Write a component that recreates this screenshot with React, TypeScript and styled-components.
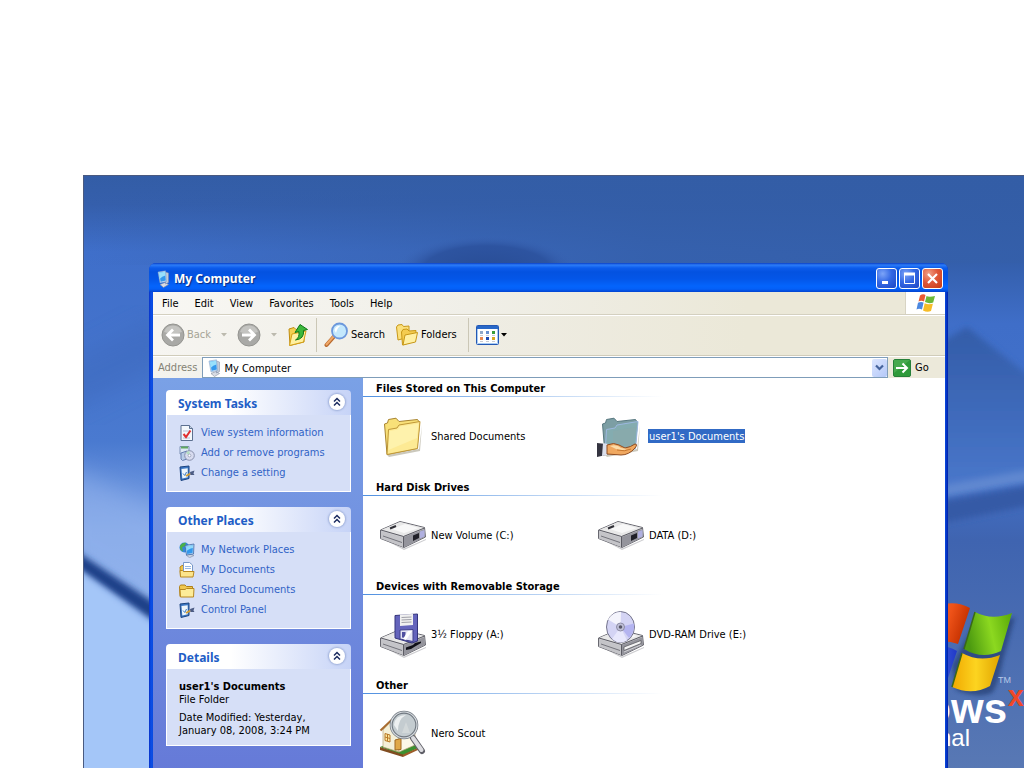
import React from "react";
import styled, { createGlobalStyle } from "styled-components";

const GlobalStyle = createGlobalStyle`
  *, *::before, *::after { box-sizing: border-box; }
  body {
    margin: 0;
    background: #fff;
    color: #000;
    font: 11px/14px "DejaVu Sans Condensed", "DejaVu Sans", sans-serif;
  }
  button, input { font: inherit; color: inherit; }
  button { border: 0; padding: 0; background: none; }
  h1, h2, p, ul { margin: 0; padding: 0; }
  ul { list-style: none; }
  svg { display: block; flex: none; }
`;

/* ---------- desktop ---------- */

const Page = styled.div`
  display: flex;
  height: 100vh;
  padding: 175px 0 0 83px;
  overflow: hidden;
`;

const Desktop = styled.div`
  position: relative;
  flex: 1;
  min-width: 0;
  overflow: hidden;
  background: #4069b8;
`;

const WallpaperArt = styled.svg`
  position: absolute;
  inset: 0;
  width: 100%;
  height: 100%;
`;

const BrandArt = styled.svg`
  position: absolute;
  top: 420px;
  right: 0;
`;

/* ---------- window frame ---------- */

const Window = styled.section`
  position: absolute;
  top: 88px;
  left: 66px;
  right: 76px;
  min-height: 560px;
  display: flex;
  flex-direction: column;
  padding: 0 3px 4px 4px;
  border-radius: 7px 7px 0 0;
  background: linear-gradient(90deg, #0831c8 0, #0a4ee6 2px, #0a4be0 4px, #0a4be0 calc(100% - 3px), #0020a8 100%);
`;

const TitleBar = styled.header`
  display: flex;
  align-items: center;
  gap: 2px;
  height: 29px;
  margin: 0 -3px 0 -4px;
  padding: 2px 5px 0 7px;
  border-radius: 7px 7px 0 0;
  background: linear-gradient(#0b3fc4 0, #2c7cf8 2px, #0c5cec 5px, #0452e0 9px, #0456e8 16px, #0464fc 23px, #0460f8 26px, #0344d0 29px);
`;

const WindowTitle = styled.h1`
  flex: 1;
  color: #fff;
  font: bold 12px/18px "Noto Sans", sans-serif;
  text-shadow: 1px 1px 1px #0a2a80;
`;

const CaptionButtons = styled.div`
  display: flex;
  gap: 2px;
`;

const CaptionButton = styled.button<{ $close?: boolean }>`
  display: grid;
  place-items: center;
  width: 21px;
  height: 21px;
  border: 1px solid #fff;
  border-radius: 3px;
  background: ${(p) =>
    p.$close
      ? "radial-gradient(circle at 30% 25%, #f0a088 0, #e0583a 45%, #c43a14 100%)"
      : "radial-gradient(circle at 30% 25%, #7ca4f8 0, #3468e4 45%, #1c46c4 100%)"};
`;

/* ---------- menu, tool and address bars ---------- */

const MenuBar = styled.nav`
  display: flex;
  height: 23px;
  padding-left: 1px;
  border-bottom: 1px solid #d4d0c0;
  background: linear-gradient(90deg, #f8f7f3, #f0efe8 40%, #ebe8d8 75%);
`;

const MenuButton = styled.button`
  height: 22px;
  padding: 1px 8px 0;
`;

const MenuLogo = styled.div`
  display: grid;
  place-items: center;
  width: 40px;
  margin-left: auto;
  border-left: 1px solid #d8d4c4;
  background: #fff;
`;

const ToolBar = styled.div`
  display: flex;
  align-items: center;
  height: 41px;
  padding: 0 8px 2px;
  border-top: 1px solid #fff;
  border-bottom: 1px solid #d0ccba;
  background: linear-gradient(90deg, #f6f5f1, #efede4 40%, #ebe8d8 75%);
`;

const ToolButton = styled.button<{ $faded?: boolean }>`
  display: flex;
  align-items: center;
  gap: 2px;
  height: 32px;
  color: ${(p) => (p.$faded ? "#a6a496" : "#000")};
`;

const ToolGroup = styled.div<{ $end?: number }>`
  display: flex;
  align-items: center;
  height: 34px;
  gap: 10px;
  padding-right: ${(p) => p.$end ?? 0}px;
`;

const Divider = styled.i`
  width: 1px;
  height: 34px;
  margin: 0 7px;
  background: #cbc7b6;
`;

const AddressBar = styled.form`
  display: flex;
  align-items: center;
  height: 22px;
  padding: 0 0 0 5px;
  gap: 5px;
  border-top: 1px solid #fff;
  background: linear-gradient(90deg, #f4f3ee, #ece9da 75%);
`;

const AddressLabel = styled.label`
  color: #848274;
`;

const AddressBox = styled.div`
  display: flex;
  flex: 1;
  align-items: center;
  gap: 1px;
  height: 21px;
  padding: 0 0 0 4px;
  border: 1px solid #7f9db9;
  background: #fff;
`;

const AddressInput = styled.input`
  flex: 1;
  min-width: 0;
  height: 18px;
  padding: 1px 0 0;
  border: 0;
  outline: 0;
  background: transparent;
`;

const DropButton = styled.button`
  display: grid;
  place-items: center;
  width: 15px;
  height: 18px;
  border-radius: 2px;
  background: linear-gradient(135deg, #dce6ff, #b4c8f8);
`;

const GoButton = styled.button`
  display: flex;
  align-items: center;
  gap: 4px;
  width: 52px;
`;

/* ---------- explorer body ---------- */

const Body = styled.div`
  display: flex;
  flex: 1;
  background: #fff;
`;

const SideBar = styled.aside`
  display: flex;
  flex-direction: column;
  flex: none;
  gap: 15px;
  width: 210px;
  padding: 12px 12px 16px 13px;
  background: linear-gradient(#7aa1e6, #6375d6);
`;

const Panel = styled.section`
  border-radius: 4px 4px 0 0;
  overflow: hidden;
`;

const PanelHeader = styled.div`
  display: flex;
  align-items: center;
  justify-content: space-between;
  height: 25px;
  padding: 0 6px 2px 12px;
  background: linear-gradient(90deg, #fff 0, #fff 35%, #c6d3f7 100%);
`;

const PanelTitle = styled.h2`
  padding-top: 5px;
  color: #215dc6;
  font: bold 12px/16px "Noto Sans", sans-serif;
`;

const CollapseButton = styled.button`
  display: grid;
  place-items: center;
  width: 16px;
  height: 16px;
  border-radius: 50%;
  background: #fff;
  box-shadow: 0 0 2px 1px #9cadd8;
`;

const PanelBody = styled.div`
  padding: 8px 12px;
  border: 1px solid #fff;
  border-top: 0;
  background: #d6dff7;
`;

const TaskLink = styled.a`
  display: flex;
  align-items: center;
  gap: 6px;
  height: 20px;
  color: #3163c6;
  text-decoration: none;
  white-space: nowrap;
`;

const DetailName = styled.p`
  padding-top: 3px;
  font-weight: bold;
  line-height: 13px;
`;

const DetailText = styled.p`
  line-height: 13px;

  & + & { padding-top: 5px; }
`;

const Content = styled.main`
  flex: 1;
  min-width: 0;
`;

const Group = styled.section`
  height: 99px;
`;

const GroupTitle = styled.h2`
  height: 19px;
  padding: 3px 0 0 13px;
  font: bold 11px/15px "DejaVu Sans Condensed", "DejaVu Sans", sans-serif;
  background: linear-gradient(90deg, #5090e0 0, #a8c8f0 150px, #fff 300px) bottom / 100% 1px no-repeat;
`;

const Tiles = styled.ul`
  display: grid;
  grid-template-columns: 218px 218px;
  padding: 15px 0 0 16px;
`;

const Tile = styled.li`
  display: flex;
  align-items: center;
  gap: 4px;
  height: 48px;
`;

const TileName = styled.span<{ $selected?: boolean }>`
  padding: 1px 1px 0;
  margin-left: -1px;
  line-height: 13px;
  color: ${(p) => (p.$selected ? "#fff" : "#000")};
  background: ${(p) => (p.$selected ? "#316ac5" : "transparent")};
`;

/* ---------- artwork ---------- */

const Wallpaper = () => (
  <WallpaperArt viewBox="0 0 941 593" preserveAspectRatio="none" aria-hidden="true">
    <defs>
      <linearGradient id="sky" x1="0" y1="0" x2="0" y2="1">
        <stop offset="0" stopColor="#335da6" />
        <stop offset=".05" stopColor="#355fac" />
        <stop offset=".13" stopColor="#3f6fca" />
        <stop offset=".3" stopColor="#4473cc" />
        <stop offset=".45" stopColor="#4a7ad0" />
        <stop offset=".6" stopColor="#7fa4e6" />
        <stop offset="1" stopColor="#a6c8f8" />
      </linearGradient>
      <linearGradient id="skyTop" x1="0" y1="0" x2="1" y2="0">
        <stop offset="0" stopColor="#335da6" stopOpacity="0" />
        <stop offset=".6" stopColor="#335da6" stopOpacity=".8" />
        <stop offset="1" stopColor="#335da6" stopOpacity=".9" />
      </linearGradient>
      <linearGradient id="right" x1="0" y1="0" x2="0" y2="1">
        <stop offset="0" stopColor="#345fac" />
        <stop offset=".12" stopColor="#3f6ec8" />
        <stop offset=".4" stopColor="#4473cc" />
        <stop offset=".55" stopColor="#3f64b0" />
        <stop offset="1" stopColor="#5878b4" />
      </linearGradient>
      <linearGradient id="hill" x1="0" y1="0" x2="0" y2="1">
        <stop offset="0" stopColor="#335ca8" />
        <stop offset="1" stopColor="#4a78cc" />
      </linearGradient>
      <radialGradient id="dome">
        <stop offset="0" stopColor="#284c94" />
        <stop offset=".7" stopColor="#2c529e" stopOpacity=".9" />
        <stop offset="1" stopColor="#3a64b4" stopOpacity="0" />
      </radialGradient>
      <filter id="soft"><feGaussianBlur stdDeviation="3" /></filter>
      <filter id="softer"><feGaussianBlur stdDeviation="12" /></filter>
    </defs>
    <rect width="941" height="593" fill="url(#sky)" />
    <rect width="941" height="90" fill="url(#skyTop)" />
    <rect x="850" y="88" width="91" height="505" fill="url(#right)" />
    <ellipse cx="404" cy="96" rx="92" ry="36" fill="url(#dome)" />
    <path d="M-20 190 80 140V190L-20 240Z" fill="#3c69bc" opacity=".5" filter="url(#softer)" />
    <path d="M-20 380 90 450V340L-20 290Z" fill="#96b6ee" opacity=".55" filter="url(#softer)" />
    <path d="M-10 374 90 440V460L-10 390Z" fill="#1d3f88" filter="url(#soft)" />
    <path d="M-10 392 90 464V600H-10Z" fill="#a4c6f8" filter="url(#soft)" />
    <path d="M850 172 884 152 950 204V305L850 318Z" fill="url(#hill)" filter="url(#soft)" />
    <path d="M850 312 950 294V306L850 324Z" fill="#6088d0" filter="url(#soft)" />
    <path d="M850 328 950 310V330L850 350Z" fill="#365aa6" filter="url(#soft)" />
    <path d="M0 .5H941M.5 0V593" stroke="#4a5a80" fill="none" />
  </WallpaperArt>
);

const Brand = () => (
  <BrandArt width="180" height="180" viewBox="0 0 180 180" aria-hidden="true">
    <defs>
      <linearGradient id="red" x1="0" x2="1" y2=".3"><stop offset="0" stopColor="#f07848" /><stop offset=".6" stopColor="#ee5218" /><stop offset="1" stopColor="#c43000" /></linearGradient>
      <linearGradient id="green" x1="0" x2="1" y1=".2"><stop offset="0" stopColor="#4c9a10" /><stop offset=".5" stopColor="#8cd820" /><stop offset="1" stopColor="#58a808" /></linearGradient>
      <linearGradient id="blue" x1="0" x2="1"><stop offset="0" stopColor="#6c98f0" /><stop offset="1" stopColor="#2038c8" /></linearGradient>
      <linearGradient id="gold" x1="0" x2="1"><stop offset="0" stopColor="#f0a800" /><stop offset=".5" stopColor="#fcd420" /><stop offset="1" stopColor="#e0a400" /></linearGradient>
      <filter id="cast"><feGaussianBlur stdDeviation="2" /></filter>
    </defs>
    <path d="M134 22Q150 30 171 22L159 65Q154 90 148 98Q134 104 112 95L108 70Z" fill="#1c3468" opacity=".6" filter="url(#cast)" />
    <path d="M90 12Q110 4 126 13L114 49Q98 43 80 50Z" fill="url(#red)" />
    <path d="M76 56Q96 46 113 56L101 92Q90 84 66 93Z" fill="url(#blue)" />
    <path d="M131 17Q148 26 168 18L157 56Q138 65 120 54Z" fill="url(#green)" />
    <path d="M118 58Q136 68 156 60L146 91Q128 101 108 92Z" fill="url(#gold)" />
    <path d="M131 17 120 54M118 58 108 92" stroke="#3a6818" strokeWidth="1.500" />
    <text x="154" y="88" fill="#b8c8e8" fontSize="9" fontFamily="Liberation Sans, sans-serif">TM</text>
    <text x="163" y="128" textAnchor="end" fill="#fff" fontSize="42" fontWeight="bold" fontFamily="Liberation Sans, sans-serif">ows</text>
    <text x="180" y="111" textAnchor="end" fill="#f04828" fontSize="29" fontWeight="bold" fontFamily="Liberation Sans, sans-serif">x</text>
    <text x="126" y="151" textAnchor="end" fill="#fff" fontSize="24" fontFamily="Liberation Sans, sans-serif">nal</text>
  </BrandArt>
);

const FlagIcon = () => (
  <svg width="20" height="20" viewBox="0 0 20 20" aria-hidden="true">
    <path d="M4 2.500Q7 .5 9.500 2L8 8.500Q5.500 7 2.500 8.500Z" fill="#ea5a34" />
    <path d="M10.500 3Q13 4.500 19 3L17.200 9.500Q13 11 9 9Z" fill="#6cb838" />
    <path d="M2 9.800Q5 8.200 7.600 9.600L6 16.500Q3 15 .5 16.500Z" fill="#4c88e0" />
    <path d="M8.700 10.300Q12 12 16.900 10.800L15 18Q11 19.500 7 17.400Z" fill="#f6bc28" />
  </svg>
);

const ComputerIcon = () => (
  <svg width="16" height="18" viewBox="0 0 16 18" aria-hidden="true">
    <path d="M4 14.500 9 12.500 12.500 14.500 7.500 17.500Z" fill="#d8dce4" stroke="#8890a0" strokeWidth=".6" />
    <path d="M9.500 2 12.500 3V12.500L9.500 14Z" fill="#c4ccd8" stroke="#7884a0" strokeWidth=".5" />
    <path d="M2 2 9.500 .8 10.500 11.500 4 13Z" fill="#c8e0f8" stroke="#7898c0" strokeWidth=".5" />
    <path d="M2.800 2.800 9 1.800 9.800 10.500 4.700 11.800Z" fill="#3498ec" />
    <path d="M2.800 2.800 9 1.800 9.400 5.500Q6 6 3.700 9Z" fill="#98e0fc" />
  </svg>
);

const MinimizeGlyph = () => (
  <svg width="15" height="15" aria-hidden="true"><path d="M3 11.500H9" stroke="#fff" strokeWidth="3" /></svg>
);
const MaximizeGlyph = () => (
  <svg width="15" height="15" fill="none" stroke="#fff" aria-hidden="true"><path d="M2.500 3V12.500H12.500V3" /><path d="M2 3H13" strokeWidth="3" /></svg>
);
const CloseGlyph = () => (
  <svg width="15" height="15" stroke="#fff" strokeWidth="2.200" aria-hidden="true"><path d="M3 3 12 12M12 3 3 12" /></svg>
);

const RoundArrow = ({ flip }: { flip?: boolean }) => (
  <svg width="24" height="24" viewBox="0 0 24 24" aria-hidden="true">
    <circle cx="12" cy="12" r="11" fill="#a9a9a6" stroke="#949490" />
    <path d="M3 9A9.500 9.500 0 0 1 21 9Q12 12 3 9Z" fill="#c4c4c1" />
    <path
      d={flip ? "M5 12H17M12 6.500 17.500 12 12 17.500" : "M19 12H7M12 6.500 6.500 12 12 17.500"}
      fill="none" stroke="#fff" strokeWidth="2.800"
    />
  </svg>
);

const Caret = ({ faded }: { faded?: boolean }) => (
  <svg width="6" height="4" aria-hidden="true"><path d="M0 0H6L3 3.500Z" fill={faded ? "#bcbaae" : "#000"} /></svg>
);

const UpFolderIcon = () => (
  <svg width="22" height="24" viewBox="0 0 22 24" aria-hidden="true">
    <path d="M2 6 7 4.500 9 6.500 17 5V19L3 22.500Z" fill="#f4d050" stroke="#c08c10" />
    <path d="M2.500 22.500 5 11 19 8 16.500 19Z" fill="#fff0a0" stroke="#d4a018" />
    <path d="M8.500 17Q13 14.500 11.800 8.500L8 9.500 13 1.500 20.500 6.500 16.500 7.500Q17.500 16 8.500 17Z" fill="#3cb83c" stroke="#107818" />
  </svg>
);

const SearchIcon = () => (
  <svg width="25" height="26" viewBox="0 0 25 26" aria-hidden="true">
    <path d="M2.500 23 10 14.500" stroke="#b8682c" strokeWidth="4" strokeLinecap="round" />
    <path d="M2.500 22.500 9.500 14.500" stroke="#f0a868" strokeWidth="2" strokeLinecap="round" />
    <circle cx="15.500" cy="9" r="7.500" fill="#c4e8fc" stroke="#6c98dc" strokeWidth="1.800" />
    <path d="M10.500 8Q12 3.500 16.500 3.800 13 6 12 11Z" fill="#fff" />
  </svg>
);

const FoldersIcon = () => (
  <svg width="24" height="24" viewBox="0 0 24 24" fill="#fbe07c" stroke="#c89818" aria-hidden="true">
    <path d="M1.500 4 3 2 7 1.500 8.500 3.500 14 3V14L3 17Z" />
    <path d="M6.500 9 8 6.500 12 6 14 8 21 7.500 20 18 7.500 22Z" fill="#f4cc50" />
    <path d="M8 22 10 12 22.500 9.500 20.500 19Z" fill="#fff0a4" />
  </svg>
);

const ViewsIcon = () => (
  <svg width="23" height="20" viewBox="0 0 23 20" aria-hidden="true">
    <rect x=".5" y=".5" width="22" height="19" rx="1" fill="#fff" stroke="#2458b4" />
    <path d="M1.500 4V18.500H21.500V4" fill="none" stroke="#a8ccf4" />
    <path d="M1 1H22V4H1Z" fill="#2868c8" />
    <path d="M4 6H7V9H4Z" fill="#90a8c8" /><path d="M10 6H13V9H10Z" fill="#6890d0" /><path d="M16 6H19V9H16Z" fill="#389c38" />
    <path d="M4 12H7V15H4Z" fill="#e88850" /><path d="M10 12H13V15H10Z" fill="#1c48b0" /><path d="M16 12H19V15H16Z" fill="#d8a820" />
    <path d="M4 10.500H7M10 10.500H13M16 10.500H19M4 16.500H7M10 16.500H13M16 16.500H19" stroke="#c8ccd4" />
  </svg>
);

const DropGlyph = () => (
  <svg width="9" height="7" fill="none" stroke="#45639c" strokeWidth="2.200" aria-hidden="true"><path d="M1 1.500 4.500 5 8 1.500" /></svg>
);

const GoIcon = () => (
  <svg width="18" height="18" viewBox="0 0 18 18" aria-hidden="true">
    <rect x=".5" y=".5" width="17" height="17" rx="1.500" fill="#2f9a3a" stroke="#26803a" />
    <path d="M1 1H17L1 14Z" fill="#58b45c" opacity=".6" />
    <path d="M3 9H14M9.500 4.500 14 9 9.500 13.500" fill="none" stroke="#fff" strokeWidth="2" />
  </svg>
);

const ChevronsUp = () => (
  <svg width="10" height="10" viewBox="0 0 10 10" fill="none" stroke="#1c2c60" strokeWidth="1.500" aria-hidden="true"><path d="M2 4.500 5 1.500 8 4.500M2 8.500 5 5.500 8 8.500" /></svg>
);

const InfoIcon = () => (
  <svg width="16" height="16" viewBox="0 0 16 16" aria-hidden="true">
    <path d="M2 .5H10.500L13.500 3.500V15.500H2Z" fill="#f4f8fc" stroke="#5c7090" />
    <path d="M10.500 .5V3.500H13.500" fill="#c8d4e4" stroke="#5c7090" />
    <path d="M4 6H11M4 13H11" stroke="#b4c0d4" />
    <path d="M4.500 9 7 12 11.500 5.500" fill="none" stroke="#e03030" strokeWidth="2" />
  </svg>
);

const ProgramsIcon = () => (
  <svg width="16" height="16" viewBox="0 0 16 16" aria-hidden="true">
    <path d="M1 1.500H10V9H1Z" fill="#dce8f4" stroke="#7c90b4" />
    <path d="M2 2.500H9" stroke="#60a860" strokeWidth="2" />
    <path d="M2 8 8 6V14L3.500 15.500 2 14Z" fill="#b8cce8" stroke="#6880b0" />
    <circle cx="10.500" cy="10.500" r="4.800" fill="#d8dcf0" stroke="#8890ac" />
    <path d="M10.500 10.500 7 8Q8.500 6 10.500 6Z" fill="#b4e0c0" />
    <circle cx="10.500" cy="10.500" r="1.400" fill="#fff" stroke="#8890ac" strokeWidth=".7" />
  </svg>
);

const SettingsIcon = () => (
  <svg width="16" height="16" viewBox="0 0 16 16" aria-hidden="true">
    <path d="M1 2 10 1V13.500L2 15.500Z" fill="#3c78c4" stroke="#1c4480" />
    <path d="M2.500 4 8.700 3.200V12.200L3.300 13.500Z" fill="#eef6fc" />
    <path d="M4 8.500 5.800 10.500 7.500 7" stroke="#3878c0" fill="none" />
    <path d="M7 11 11.500 8.500" stroke="#d8a030" strokeWidth="2" />
    <path d="M11 7 15.500 5.500 14.500 8.500 15.500 10 11.500 10Z" fill="#4c5c84" />
  </svg>
);

const NetworkIcon = () => (
  <svg width="16" height="16" viewBox="0 0 16 16" aria-hidden="true">
    <circle cx="5.500" cy="5.500" r="5" fill="#3488d8" />
    <path d="M1 4Q3 .5 7 .8L6 4 3 5.500 4 9.500Q.5 8 1 4Z" fill="#4cb048" />
    <path d="M7 13 11 12 15 13.500 10.500 15.700Z" fill="#ccd4e0" stroke="#7888a8" strokeWidth=".6" />
    <path d="M6 3.500 15 2 14.500 12 7.500 13Z" fill="#c0dcf4" stroke="#3c68a8" strokeWidth=".8" />
    <path d="M7 4.500 14 3.300 13.600 11 8.200 12Z" fill="#3498ec" />
    <path d="M7 4.500 14 3.300V6Q9 7 7.500 9.500Z" fill="#90d8fa" />
  </svg>
);

const DocumentsIcon = () => (
  <svg width="16" height="16" viewBox="0 0 16 16" aria-hidden="true">
    <path d="M1 5 3 3.500H13.500V14.500H1.500Z" fill="#f0c448" stroke="#b88820" />
    <path d="M4.500 .5H10.500L13.500 3V12H4.500Z" fill="#fff" stroke="#7898c8" />
    <path d="M6 4.500H12M6 6.500H12" stroke="#98b8e4" />
    <path d="M1 8.500H3.500L4.500 9.500H15L14 15H1.500Z" fill="#fbe48c" stroke="#b88820" />
  </svg>
);

const FolderIcon = () => (
  <svg width="16" height="16" viewBox="0 0 16 16" aria-hidden="true">
    <path d="M.5 4.500 1.500 3H6L7.500 4.500H13.500V14.500H1Z" fill="#f0c850" stroke="#b08018" />
    <path d="M1 7.500H6L7.500 6.500H15L14.500 15H1.500Z" fill="#fdec98" stroke="#b88820" />
  </svg>
);

const BigFolder = ({ shared }: { shared?: boolean }) => (
  <svg width="48" height="48" viewBox="0 0 48 48" aria-hidden="true">
    <path d="M8 43 40 37 43 13 41 39 10 45Z" fill="#a8a490" opacity=".6" />
    <path
      d="M5.500 12 8.500 11 9.500 7.500 17 6.200 20 9.500 38.500 7.500 40.500 10.500 38 36.500 8 42.500Z"
      fill={shared ? "#7c9ea4" : "#f8e078"} stroke={shared ? "#587880" : "#a88430"}
    />
    <path
      d="M9.500 17.500 18 16 20 13 41 9.500 38.500 36.500 8 42.500Z"
      fill={shared ? "#84acb0" : "#fdea94"} stroke={shared ? "#9cb8e0" : "#c09838"}
    />
    {shared ? (
      <>
        <path d="M16 19 39 15 36 34 16 38Z" fill="#8ca8a8" opacity=".5" />
        <path d="M0 31 9 32V43L0 45Z" fill="#343440" />
        <path d="M6 31 11 32 10 43 5 44Z" fill="#dce0ec" />
        <path d="M10 33Q17 30 22 33L28 36Q34 35 38 32Q41 32 38 36Q32 43 24 43L10 42Z" fill="#f0a860" stroke="#904c20" />
        <path d="M13 34Q20 32 24 36L30 37Q26 39 19 37Z" fill="#fcdca8" />
        <path d="M20 38Q28 40 34 37" stroke="#c87830" fill="none" />
      </>
    ) : (
      <path d="M10.500 19 19 17.500 21 14.500 39.500 11.500 38 26 9.500 38Z" fill="#fff6bc" opacity=".6" />
    )}
  </svg>
);

const DriveBody = ({ top, kind }: { top: number; kind: "disk" | "floppy" | "dvd" }) => (
  <g transform={`translate(0 ${top})`}>
    <path d="M6 20 25 28.500 47 19V20L25 30Z" fill="#808088" opacity=".4" />
    <path d="M1.500 10 21 1.500 45.500 7.500 46.500 17 25 27.500 1.500 18.500Z" fill="#d0d0d4" stroke="#686870" />
    <path d="M2 10 21 2 45 8 24.500 16Z" fill="#e8e8e8" />
    <path d="M13 9 26 4 40 8 25 13Z" fill="#fafafa" opacity=".9" />
    <path d="M2 11 24 17.500V27L2 18.500Z" fill="#c4c4c8" />
    <path d="M4 16 23 22.500" stroke="#74747c" />
    <path d="M25 17 45.500 9 46 17 25 27Z" fill="#94949c" />
    <path d="M2 10 24.500 16.500 45.500 8M24.500 16.500V27" fill="none" stroke="#5c5c64" />
    {kind === "disk" && (
      <>
        <path d="M11 8.500 17 6" stroke="#303038" strokeWidth="2" />
        <path d="M34 15.500 40 13V18L34 21Z" fill="#202028" />
        <path d="M41 11.500 45.500 10V16.500L41 18.500Z" fill="#b0b0e0" />
      </>
    )}
    {kind === "floppy" && <path d="M27 19.500 34 17 36 15 42 13.500V15L36 18.500 32 21 27 22Z" fill="#101018" />}
    {kind === "dvd" && (
      <>
        <path d="M27 19 44 12.500V15.500L27 22.500Z" fill="#f4f4f4" stroke="#505058" strokeWidth=".7" />
        <path d="M27 24 44 17" stroke="#d0d0d4" />
      </>
    )}
  </g>
);

const HardDisk = () => (
  <svg width="48" height="48" viewBox="0 0 48 48" aria-hidden="true"><DriveBody top={9} kind="disk" /></svg>
);

const FloppyDrive = () => (
  <svg width="48" height="48" viewBox="0 0 48 48" aria-hidden="true">
    <DriveBody top={18} kind="floppy" />
    <path d="M16 5.500 38.500 4V31L33 33 16 28Z" fill="#6464bc" stroke="#34347c" />
    <path d="M21 4.500 34 4V15L21 16Z" fill="#f0f0f0" />
    <path d="M22.500 7.500 32.500 7M22.500 10 32.500 9.500M22.500 12.500 32.500 12" stroke="#a0a0a8" />
    <path d="M21 20 34 19.500V31.500L21 29Z" fill="#e4e4f4" stroke="#40408c" />
    <path d="M23 22H26.500V28L23 27.500Z" fill="#5050a0" />
    <path d="M29 21 33 21 27 30 24 29Z" fill="#fff" />
  </svg>
);

const DvdDrive = () => (
  <svg width="48" height="48" viewBox="0 0 48 48" aria-hidden="true">
    <DriveBody top={18} kind="dvd" />
    <ellipse cx="23.500" cy="17" rx="14" ry="15.500" fill="#d4d4f4" stroke="#74748c" />
    <path d="M23.500 17 11 9.500Q16 1.500 24 2Z" fill="#f4f4fc" />
    <path d="M23.500 17 37 13.500Q38 22 32 28Z" fill="#b4b4f0" />
    <path d="M23.500 17 30 30.500Q22 35 15 29Z" fill="#e8e8fc" />
    <circle cx="23.500" cy="17" r="4" fill="#c0c0d8" stroke="#8c8ca4" />
    <circle cx="23.500" cy="17" r="1.800" fill="#585868" />
  </svg>
);

const NeroScout = () => (
  <svg width="48" height="48" viewBox="0 0 48 48" aria-hidden="true">
    <path d="M1 38 21 30 41 38 24 46.500Z" fill="#3c9030" />
    <path d="M1 38V41L24 48V45.500Z" fill="#804c20" /><path d="M24 45.500V48L41 40V38Z" fill="#9c5c28" />
    <path d="M4 21 11 13 20 25V43L4 38Z" fill="#f4f0d8" stroke="#b8a478" strokeWidth=".7" />
    <path d="M20 24 36 22V36L20 43Z" fill="#fcf8e8" stroke="#b8a478" strokeWidth=".7" />
    <path d="M1.500 21.500 12 11.500 21 24" fill="none" stroke="#a86c30" strokeWidth="2" />
    <path d="M12 11 32 10 39 20 21 24Z" fill="#c48848" />
    <path d="M6 24.500 11 26V33L6 31.500Z" fill="#fce8a0" stroke="#b87828" />
    <path d="M6 28 11 29.500M8.500 25V32" stroke="#b87828" />
    <path d="M16 31 22 29.500V40.500L16 41Z" fill="#e0a848" stroke="#a06820" />
    <path d="M34 29 43 42" stroke="#606068" strokeWidth="6" strokeLinecap="round" />
    <path d="M34 29 42.500 41" stroke="#dcdce0" strokeWidth="4" strokeLinecap="round" />
    <circle cx="25" cy="16" r="12.800" fill="#c4ccd0" stroke="#707880" strokeWidth="3" />
    <circle cx="25" cy="16" r="13" fill="none" stroke="#d8dce0" strokeWidth="1.200" />
    <path d="M15 16Q16 6 27 6 19 10 19 22Z" fill="#fff" opacity=".7" />
    <path d="M23 24 27 13 31 24Z" fill="#dce0e0" opacity=".6" />
  </svg>
);

/* ---------- page ---------- */

const menus = ["File", "Edit", "View", "Favorites", "Tools", "Help"];

const systemTasks = [
  { label: "View system information", icon: <InfoIcon /> },
  { label: "Add or remove programs", icon: <ProgramsIcon /> },
  { label: "Change a setting", icon: <SettingsIcon /> },
];

const otherPlaces = [
  { label: "My Network Places", icon: <NetworkIcon /> },
  { label: "My Documents", icon: <DocumentsIcon /> },
  { label: "Shared Documents", icon: <FolderIcon /> },
  { label: "Control Panel", icon: <SettingsIcon /> },
];

const groups = [
  {
    title: "Files Stored on This Computer",
    items: [
      { label: "Shared Documents", icon: <BigFolder /> },
      { label: "user1's Documents", icon: <BigFolder shared />, selected: true },
    ],
  },
  {
    title: "Hard Disk Drives",
    items: [
      { label: "New Volume (C:)", icon: <HardDisk /> },
      { label: "DATA (D:)", icon: <HardDisk /> },
    ],
  },
  {
    title: "Devices with Removable Storage",
    items: [
      { label: "3½ Floppy (A:)", icon: <FloppyDrive /> },
      { label: "DVD-RAM Drive (E:)", icon: <DvdDrive /> },
    ],
  },
  { title: "Other", items: [{ label: "Nero Scout", icon: <NeroScout /> }] },
];

const SidePanel = ({ title, children }: { title: string; children: React.ReactNode }) => (
  <Panel>
    <PanelHeader>
      <PanelTitle>{title}</PanelTitle>
      <CollapseButton aria-label={`Collapse ${title}`}><ChevronsUp /></CollapseButton>
    </PanelHeader>
    <PanelBody>{children}</PanelBody>
  </Panel>
);

const TaskList = ({ tasks }: { tasks: { label: string; icon: React.ReactNode }[] }) => (
  <ul>
    {tasks.map((t) => (
      <li key={t.label}><TaskLink href="#">{t.icon}{t.label}</TaskLink></li>
    ))}
  </ul>
);

export default function App() {
  return (
    <Page>
      <GlobalStyle />
      <Desktop>
        <Wallpaper />
        <Brand />
        <Window>
          <TitleBar>
            <ComputerIcon />
            <WindowTitle>My Computer</WindowTitle>
            <CaptionButtons>
              <CaptionButton aria-label="Minimize"><MinimizeGlyph /></CaptionButton>
              <CaptionButton aria-label="Maximize"><MaximizeGlyph /></CaptionButton>
              <CaptionButton $close aria-label="Close"><CloseGlyph /></CaptionButton>
            </CaptionButtons>
          </TitleBar>

          <MenuBar>
            {menus.map((m) => <MenuButton key={m}>{m}</MenuButton>)}
            <MenuLogo><FlagIcon /></MenuLogo>
          </MenuBar>

          <ToolBar>
            <ToolGroup>
              <ToolButton $faded><RoundArrow />Back</ToolButton>
              <Caret faded />
              <ToolButton $faded aria-label="Forward"><RoundArrow flip /></ToolButton>
              <Caret faded />
              <ToolButton aria-label="Up"><UpFolderIcon /></ToolButton>
            </ToolGroup>
            <Divider />
            <ToolGroup $end={4}>
              <ToolButton><SearchIcon />Search</ToolButton>
              <ToolButton><FoldersIcon />Folders</ToolButton>
            </ToolGroup>
            <Divider />
            <ToolButton aria-label="Views"><ViewsIcon /><Caret /></ToolButton>
          </ToolBar>

          <AddressBar>
            <AddressLabel htmlFor="address">Address</AddressLabel>
            <AddressBox>
              <ComputerIcon />
              <AddressInput id="address" defaultValue="My Computer" />
              <DropButton type="button" aria-label="Show addresses"><DropGlyph /></DropButton>
            </AddressBox>
            <GoButton type="button"><GoIcon />Go</GoButton>
          </AddressBar>

          <Body>
            <SideBar>
              <SidePanel title="System Tasks"><TaskList tasks={systemTasks} /></SidePanel>
              <SidePanel title="Other Places"><TaskList tasks={otherPlaces} /></SidePanel>
              <SidePanel title="Details">
                <DetailName>user1's Documents</DetailName>
                <DetailText>File Folder</DetailText>
                <DetailText>Date Modified: Yesterday,<br />January 08, 2008, 3:24 PM</DetailText>
              </SidePanel>
            </SideBar>
            <Content>
              {groups.map((g) => (
                <Group key={g.title}>
                  <GroupTitle>{g.title}</GroupTitle>
                  <Tiles>
                    {g.items.map((i) => (
                      <Tile key={i.label}>
                        {i.icon}
                        <TileName $selected={"selected" in i && i.selected}>{i.label}</TileName>
                      </Tile>
                    ))}
                  </Tiles>
                </Group>
              ))}
            </Content>
          </Body>
        </Window>
      </Desktop>
    </Page>
  );
}
